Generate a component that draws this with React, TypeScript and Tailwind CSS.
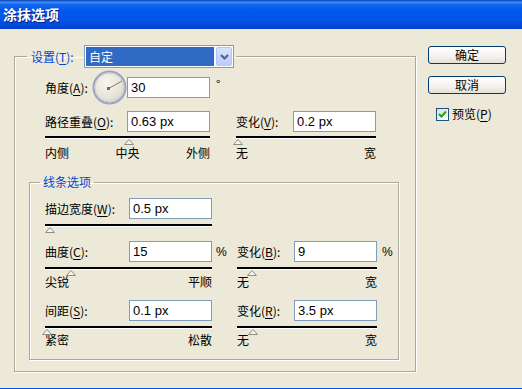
import React from "react";

const sans = "font-['Noto_Sans_CJK_SC',sans-serif]";
const num = "font-['Liberation_Sans',Arial,sans-serif]";

function Hot({ pre, k, post = "):" }: { pre: string; k: string; post?: string }) {
  return (
    <span className="whitespace-nowrap">
      {pre}(<u className="decoration-1 underline-offset-2">{k}</u>
      {post}
    </span>
  );
}

function Box({ v }: { v: string }) {
  return (
    <div
      className={`h-[21px] w-[83px] shrink-0 border border-[#7F9DB9] bg-white pl-[3px] text-[13px] leading-[19px] text-black ${num}`}
    >
      {v}
    </div>
  );
}

function Track({
  w,
  at,
  labels,
  mt = "mt-[6px]",
}: {
  w: number;
  at: number;
  labels?: string[];
  mt?: string;
}) {
  return (
    <div className="relative shrink-0" style={{ width: w }}>
      <div className="h-[2px] bg-black shadow-[0_1px_0_#fff]" />
      <svg
        className="absolute top-[3px]"
        style={{ left: at - 5 }}
        width="10"
        height="6"
        viewBox="0 0 10 6"
      >
        <polygon points="5,0.5 9.5,5.5 0.5,5.5" fill="#F4F3EE" stroke="#8E8C86" strokeWidth="1" />
      </svg>
      {labels && (
        <div className={`${mt} flex justify-between leading-[14px]`}>
          {labels.map((l) => (
            <span key={l}>{l}</span>
          ))}
        </div>
      )}
    </div>
  );
}

function Dial() {
  return (
    <svg width="35" height="35" viewBox="0 0 35 35" className="shrink-0">
      <defs>
        <radialGradient id="dg" cx="40%" cy="35%" r="70%">
          <stop offset="0%" stopColor="#F7F6F0" />
          <stop offset="70%" stopColor="#E6E3D6" />
          <stop offset="100%" stopColor="#D2CEBE" />
        </radialGradient>
      </defs>
      <circle cx="17.5" cy="17.5" r="16" fill="url(#dg)" stroke="#9AA5C2" strokeWidth="2" />
      <circle cx="17.5" cy="17.5" r="14.5" fill="none" stroke="#C9CCD6" strokeWidth="1" />
      <line x1="16.5" y1="18.5" x2="30" y2="11" stroke="#7D7B74" strokeWidth="1" />
      <rect x="15" y="17" width="3" height="3" fill="#6E6C66" />
    </svg>
  );
}

function Combo() {
  return (
    <div className="flex h-[23px] w-[150px] border border-[#7F9DB9] bg-white p-[1px]">
      <div className="flex-1 bg-[#316AC5] pl-[3px] leading-[19px] text-white">自定</div>
      <div className="ml-[2px] flex w-[16px] items-center justify-center rounded-[2px] border border-[#B5C6F3] bg-[linear-gradient(180deg,#D6E2FE,#BACDFB)]">
        <svg width="9" height="6" viewBox="0 0 9 6">
          <polyline points="1,1 4.5,4.5 8,1" fill="none" stroke="#4D6185" strokeWidth="2" />
        </svg>
      </div>
    </div>
  );
}

function Btn({ t }: { t: string }) {
  return (
    <div className="flex h-[18px] w-[78px] items-center justify-center rounded-[3px] border border-[#003C74] bg-[linear-gradient(180deg,#FFFFFF_0%,#F3F2EE_60%,#E3E0D6_100%)] leading-[14px]">
      {t}
    </div>
  );
}

const etched = "border border-[#ACA899] shadow-[inset_1px_1px_0_#fff,1px_1px_0_#fff]";

export default function App() {
  return (
    <div
      className={`flex h-[389px] w-[522px] flex-col overflow-hidden border-b border-[#0054E3] bg-[#ECE9D8] text-[12px] text-black ${sans}`}
    >
      <div className="flex h-[29px] shrink-0 items-center bg-[linear-gradient(180deg,#0A3FB8_0%,#3E8DF5_8%,#1366EE_16%,#0058EE_35%,#0055E8_70%,#0049DA_90%,#0040C4_100%)] pl-[3px]">
        <span className="text-[14px] font-bold text-white [text-shadow:1px_1px_0_#0A1883]">涂抹选项</span>
      </div>

      <div className="flex flex-1 pl-[14px] pt-[16px]">
        <fieldset className={`w-[402px] self-start pb-[11px] pl-[12px] ${etched}`}>
          <legend className="pl-[4px] pr-[2px]">
            <div className="flex h-[23px] items-center">
              <span className="w-[53px] leading-[14px] text-[#0046D5]">
                <Hot pre="设置" k="T" />
              </span>
              <Combo />
            </div>
          </legend>

          <div className="ml-[18px] pt-[2px]">
            <div className="flex h-[35px] items-center">
              <span className="w-[47px] leading-[14px]">
                <Hot pre="角度" k="A" />
              </span>
              <Dial />
              <Box v="30" />
              <span className="ml-[6px] -translate-y-[4px]">°</span>
            </div>

            <div className="mt-[6px] flex items-center">
              <div className="flex w-[165px] items-center justify-between">
                <Hot pre="路径重叠" k="O" />
                <Box v="0.63 px" />
              </div>
              <div className="ml-[26px] flex w-[140px] items-center justify-between">
                <Hot pre="变化" k="V" />
                <Box v="0.2 px" />
              </div>
            </div>

            <div className="mt-[4px] flex">
              <Track w={165} at={84} labels={["内侧", "中央", "外侧"]} mt="mt-[8px]" />
              <div className="ml-[26px]">
                <Track w={140} at={2} labels={["无", "宽"]} mt="mt-[8px]" />
              </div>
            </div>
          </div>

          <fieldset className={`ml-[2px] mt-[15px] w-[370px] pb-[12px] pl-[10px] ${etched}`}>
            <legend className="px-[3px] leading-[14px] text-[#0046D5]">线条选项</legend>
            <div className="ml-[5px]">
              <div className="mt-[9px] flex w-[167px] items-center justify-between">
                <Hot pre="描边宽度" k="W" />
                <Box v="0.5 px" />
              </div>
              <div className="mt-[5px]">
                <Track w={167} at={5} />
              </div>

              <div className="mt-[15px] flex items-center">
                <div className="flex w-[167px] items-center justify-between">
                  <Hot pre="曲度" k="C" />
                  <Box v="15" />
                </div>
                <span className={`w-[25px] pl-[4px] ${num}`}>%</span>
                <div className="flex w-[140px] items-center justify-between">
                  <Hot pre="变化" k="B" />
                  <Box v="9" />
                </div>
                <span className={`ml-[5px] ${num}`}>%</span>
              </div>
              <div className="mt-[5px] flex">
                <Track w={167} at={26} labels={["尖锐", "平顺"]} />
                <div className="ml-[25px]">
                  <Track w={140} at={15} labels={["无", "宽"]} />
                </div>
              </div>

              <div className="mt-[11px] flex items-center">
                <div className="flex w-[167px] items-center justify-between">
                  <Hot pre="间距" k="S" />
                  <Box v="0.1 px" />
                </div>
                <div className="ml-[25px] flex w-[140px] items-center justify-between">
                  <Hot pre="变化" k="R" />
                  <Box v="3.5 px" />
                </div>
              </div>
              <div className="mt-[5px] flex">
                <Track w={167} at={2} labels={["紧密", "松散"]} mt="mt-[5px]" />
                <div className="ml-[25px]">
                  <Track w={140} at={16} labels={["无", "宽"]} mt="mt-[5px]" />
                </div>
              </div>
            </div>
          </fieldset>
        </fieldset>

        <div className="ml-[12px] flex flex-col pt-[1px]">
          <Btn t="确定" />
          <div className="mt-[12px]">
            <Btn t="取消" />
          </div>
          <div className="ml-[8px] mt-[13px] flex items-center">
            <div className="flex h-[13px] w-[13px] items-center justify-center border border-[#1C5180] bg-[linear-gradient(135deg,#DCDBD5,#FFFFFF)]">
              <svg width="9" height="9" viewBox="0 0 9 9">
                <polyline points="1,4 3.5,6.5 8,1.5" fill="none" stroke="#21A121" strokeWidth="2" />
              </svg>
            </div>
            <span className="ml-[3px] leading-[14px]">
              <Hot pre="预览" k="P" post=")" />
            </span>
          </div>
        </div>
      </div>
    </div>
  );
}
